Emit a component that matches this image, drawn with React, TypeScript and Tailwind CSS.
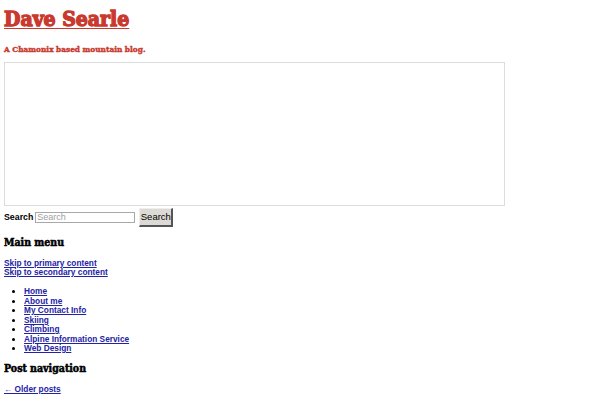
import React from 'react';

const slab = "font-['DejaVu_Serif_Condensed','DejaVu_Serif',serif] font-bold";
const sans = "font-['Liberation_Sans',Arial,sans-serif]";
const link = 'text-[#2323a5] underline';

const menu = ['Home', 'About me', 'My Contact Info', 'Skiing', 'Climbing', 'Alpine Information Service', 'Web Design'];

export default function App() {
    return (
        <div className={`min-h-[400px] bg-white px-1 pt-[5px] ${sans}`}>
            <h1 className={`${slab} text-[21px] leading-[27px] text-[#c9392e] [-webkit-text-stroke:1.3px_#c9392e]`}>
                <a href="#" className="underline decoration-1 underline-offset-2">Dave Searle</a>
            </h1>
            <p className={`${slab} mt-[11px] text-[8.2px] leading-[12px] text-[#c9392e] [-webkit-text-stroke:0.4px_#c9392e]`}>A Chamonix based mountain blog.</p>

            <div className="mt-[7px] h-[144px] w-[501px] border border-[#dcdcdc]" />

            <form className="mt-[2px] flex h-[19px] items-center text-[8.8px] font-bold" onSubmit={e => e.preventDefault()}>
                <label className="text-black">Search</label>
                <input
                    placeholder="Search"
                    className="ml-[2px] h-[11px] w-[100px] border border-[#a8a8a8] px-[1px] text-[9px] font-normal placeholder:text-[#a0a0a0]"
                />
                <button className="ml-[4px] h-[19px] w-[34px] border-b-2 border-r-2 border-l border-t border-b-[#555] border-r-[#555] border-l-[#eee] border-t-[#eee] bg-[#dddad5] text-[9.5px] font-normal text-black">
                    Search
                </button>
            </form>

            <h3 className={`${slab} mt-[8px] text-[10.5px] leading-[14px] text-black [-webkit-text-stroke:0.5px_#000]`}>Main menu</h3>

            <div className="mt-[10px] flex flex-col text-[8.3px] font-bold leading-[9px]">
                <a href="#" className={link}>Skip to primary content</a>
                <a href="#" className={link}>Skip to secondary content</a>
            </div>

            <ul className="mt-[10px] list-disc pl-[20px] text-[8.3px] font-bold leading-[9.5px]">
                {menu.map(m => (
                    <li key={m}><a href="#" className={link}>{m}</a></li>
                ))}
            </ul>

            <h3 className={`${slab} mt-[7px] text-[10.5px] leading-[14px] text-black [-webkit-text-stroke:0.5px_#000]`}>Post navigation</h3>

            <div className="mt-[9px] text-[8.3px] font-bold leading-[10px]">
                <a href="#" className={link}>← Older posts</a>
            </div>
        </div>
    );
}
